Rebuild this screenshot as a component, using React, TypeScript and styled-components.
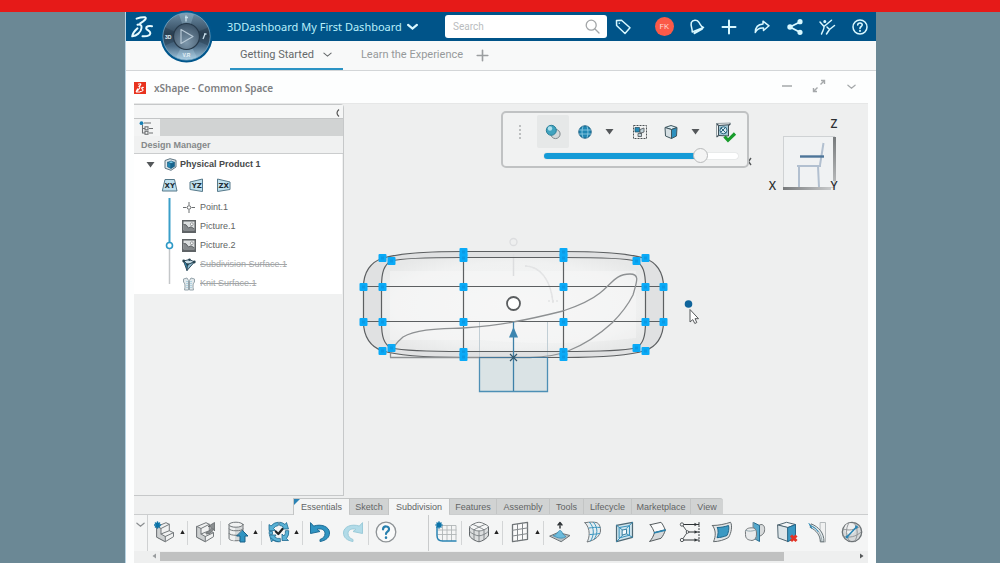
import React from "react";
import styled, { createGlobalStyle, css } from "styled-components";

const GlobalStyle = createGlobalStyle`
  * { box-sizing: border-box; }
  html, body { margin: 0; padding: 0; }
  body { font-family: "Liberation Sans", Arial, sans-serif; background: #6b8895; }
  button, input { font-family: inherit; margin: 0; }
`;

const Page = styled.div`
  min-height: 100vh;
  display: flex;
  flex-direction: column;
  background: #6b8895;
`;

const Banner = styled.div`
  height: 12px;
  background: #e61a18;
`;

const Frame = styled.div`
  flex: 1;
  width: 75.1%;
  margin-left: 12.5%;
  display: flex;
  flex-direction: column;
  background: #fdfefe;
  border-left: 1px solid #b8d3e2;
`;

const plainButton = css`
  border: 0;
  padding: 0;
  background: transparent;
  display: flex;
  align-items: center;
  justify-content: center;
  cursor: pointer;
`;

/* Header */

const Header = styled.header`
  position: relative;
  height: 29px;
  display: flex;
  align-items: center;
  background: #005489;
  color: #b9f0fb;
`;

const LogoLink = styled.a`
  display: flex;
  margin-left: 5px;
  width: 96px;
`;

const Compass = styled.button`
  ${plainButton}
  position: absolute;
  left: 34px;
  top: -2px;
  z-index: 2;
`;

const Brand = styled.h1`
  margin: 0;
  display: flex;
  gap: 3px;
  font: 400 11px/16px "Noto Sans", sans-serif;
  white-space: nowrap;
`;

const HeaderButton = styled.button<{ $grow?: boolean }>`
  ${plainButton}
  height: 24px;
  min-width: 22px;
  color: #d8f8ff;
  flex: ${(p) => (p.$grow ? "1" : "none")};
`;

const SearchBox = styled.label`
  display: flex;
  align-items: center;
  width: 162px;
  height: 23px;
  margin: 0 5px 0 auto;
  padding: 0 7px 0 8px;
  background: #fff;
  border-radius: 3px;
`;

const SearchInput = styled.input`
  flex: 1;
  min-width: 0;
  border: 0;
  padding: 0;
  outline: 0;
  background: transparent;
  font: 400 10px/14px Roboto, sans-serif;
  &::placeholder { color: #b9bcbe; opacity: 1; }
`;

const HeaderActions = styled.nav`
  display: flex;
  width: 228px;
  margin-left: 14px;
`;

const Avatar = styled.span`
  width: 19px;
  height: 19px;
  border-radius: 50%;
  background: #fb5a48;
  color: #ffd9d0;
  font: 400 8px/19px Roboto, sans-serif;
`;

/* Dashboard tabs */

const DashTabs = styled.nav`
  display: flex;
  height: 30px;
  padding-left: 104px;
  background: #f8f9f9;
  border-bottom: 1px solid #d3d6d8;
`;

const DashTab = styled.button<{ $active?: boolean }>`
  ${plainButton}
  height: 29px;
  gap: 9px;
  padding: ${(p) => (p.$active ? "0 11px 0 10px" : "0 10px 0 18px")};
  font: 400 11px/16px Roboto, sans-serif;
  color: ${(p) => (p.$active ? "#65696b" : "#96999b")};
  border-bottom: 2px solid ${(p) => (p.$active ? "#2b93c4" : "transparent")};
`;

const AddTab = styled.button`
  ${plainButton}
  width: 18px;
  height: 29px;
  color: #9b9ea0;
`;

/* Widget title */

const TitleRow = styled.div`
  display: flex;
  align-items: center;
  height: 32px;
  padding: 2px 13px 0 8px;
  gap: 8px;
`;

const WidgetTitle = styled.h2`
  margin: 0;
  flex: 1;
  font: 600 10px/14px "Noto Sans", sans-serif;
  color: #7d8082;
`;

const WindowButton = styled.button`
  ${plainButton}
  width: 24px;
  height: 22px;
  padding-bottom: 4px;
  color: #a5a8aa;
`;

/* Work area */

const Workspace = styled.main`
  flex: 1;
  display: flex;
  margin: 0 8px;
  background: #eeefef;
  border-top: 1px solid #e6e7e7;
`;

const SidePanel = styled.aside`
  width: 210px;
  display: flex;
  flex-direction: column;
  margin-bottom: 2px;
  background: #f0f1f1;
  border: 1px solid #c6c8c9;
  border-left: 0;
  border-radius: 0 4px 0 0;
`;

const PanelTop = styled.div`
  height: 13px;
  display: flex;
  justify-content: flex-end;
  background: #f5f6f6;
`;

const PanelCollapse = styled.button`
  ${plainButton}
  width: 12px;
  height: 16px;
  color: #555;
`;

const PanelTabs = styled.div`
  display: flex;
  height: 18px;
  background: #d1d3d3;
  border-top: 1px solid #c3c5c6;
`;

const PanelTab = styled.button`
  ${plainButton}
  width: 26px;
  background: #f3f4f4;
`;

const PanelTitle = styled.h3`
  margin: 0;
  padding-left: 7px;
  height: 18px;
  font: 700 9px/18px "Liberation Sans", sans-serif;
  color: #85888a;
  border-bottom: 1px solid #cbcdce;
`;

const TreeArea = styled.div`
  background: #fff;
  height: 140px;
  margin-right: 1px;
`;

const TreeRoot = styled.button`
  ${plainButton}
  height: 20px;
  padding-left: 12px;
  gap: 3px;
  font: 700 9px/20px "Liberation Sans", sans-serif;
  color: #454849;
`;

const RootIcon = styled.span`
  display: flex;
  margin-left: 6px;
`;

const Planes = styled.div`
  display: flex;
  gap: 9px;
  height: 24px;
  align-items: center;
  padding: 0 0 2px 27px;
`;

const PlaneButton = styled.button`
  ${plainButton}
`;

const TreeBody = styled.div`
  display: flex;
  padding-left: 30px;
`;

const TreeList = styled.ul`
  list-style: none;
  margin: 0;
  padding: 0 0 0 6px;
`;

const TreeItem = styled.li<{ $off?: boolean }>`
  display: flex;
  align-items: center;
  gap: 4px;
  height: 19px;
  font-size: 9px;
  line-height: 19px;
  color: ${(p) => (p.$off ? "#a2a5a7" : "#606364")};
  text-decoration: ${(p) => (p.$off ? "line-through" : "none")};
`;

/* Viewport */

const Viewport = styled.section`
  position: relative;
  flex: 1;
  min-height: 300px;
  overflow: hidden;
`;

const Scene = styled.svg`
  position: absolute;
  left: 0;
  top: 0;
`;

const AxisTriad = styled.svg`
  position: absolute;
  right: 26px;
  top: 12px;
`;

const Palette = styled.div`
  position: absolute;
  left: 157px;
  top: 7px;
  width: 248px;
  height: 57px;
  background: #f1f2f2;
  border: 2px solid #c0c2c3;
  border-radius: 5px;
  padding: 2px 7px 0 0;
`;

const PaletteRow = styled.div`
  display: flex;
  height: 33px;
`;

const PaletteButton = styled.button<{ $w: number; $on?: boolean }>`
  ${plainButton}
  width: ${(p) => p.$w}px;
  border-radius: 2px;
  background: ${(p) => (p.$on ? "#e6e8e8" : "transparent")};
`;

const Grip = styled.span`
  display: flex;
  flex-direction: column;
  justify-content: center;
  gap: 2px;
  width: 35px;
  align-items: center;
`;

const GripDot = styled.i`
  width: 2px;
  height: 2px;
  background: #bdbfc0;
`;

const Slider = styled.input`
  appearance: none;
  display: block;
  width: 194px;
  height: 16px;
  margin: 0 0 0 41px;
  background: transparent;
  &::-webkit-slider-runnable-track {
    height: 6px;
    border-radius: 3px;
    background: linear-gradient(to right, #159bd7 83%, #fff 83%);
    box-shadow: 0 0 1px #9aa0a3;
  }
  &::-webkit-slider-thumb {
    appearance: none;
    width: 15px;
    height: 15px;
    margin-top: -5px;
    border-radius: 50%;
    background: #f4f4f4;
    border: 1px solid #b8babb;
  }
`;

/* Bottom dock */

const Dock = styled.footer`
  margin: 0 8px;
  background: #eeefef;
  padding-bottom: 2px;
`;

const DockTabs = styled.div`
  display: flex;
  height: 17px;
  padding-left: 159px;
  border-bottom: 1px solid #cbcdce;
`;

const DockTab = styled.button<{ $w: number; $light?: boolean; $last?: boolean }>`
  ${plainButton}
  position: relative;
  width: ${(p) => p.$w}px;
  height: ${(p) => (p.$light ? 17 : 16)}px;
  font-size: 9px;
  line-height: 14px;
  color: #616465;
  background: ${(p) => (p.$light ? "#f4f5f5" : "#d1d3d3")};
  border: 1px solid #c3c5c5;
  border-width: 1px 0 0 1px;
  border-radius: ${(p) => (p.$last ? "0 3px 0 0" : "0")};
`;

const PinCorner = styled.i`
  position: absolute;
  left: 0;
  top: 0;
  border: 3px solid #2b83b5;
  border-right-color: transparent;
  border-bottom-color: transparent;
`;

const Tools = styled.div`
  display: flex;
  height: 36px;
  background: #f4f5f5;
`;

const DockCollapse = styled.button`
  ${plainButton}
  align-items: flex-start;
  width: 14px;
  padding-top: 5px;
  color: #8b8e90;
  border-right: 1px solid #cfd1d2;
`;

const ToolButton = styled.button<{ $w?: number; $sep?: boolean; $menu?: boolean }>`
  ${plainButton}
  position: relative;
  gap: 4px;
  justify-content: ${(p) => (p.$menu ? "flex-start" : "center")};
  padding: 0 0 2px ${(p) => (p.$menu ? 6 : 0)}px;
  flex: ${(p) => (p.$w ? `0 0 ${p.$w}px` : "1 1 0")};
  min-width: 0;
  &::after {
    content: "";
    display: ${(p) => (p.$sep ? "block" : "none")};
    position: absolute;
    right: 0;
    top: 6px;
    bottom: 6px;
    width: 1px;
    background: #d3d5d6;
  }
`;

const GroupGap = styled.div`
  width: 27px;
  border-right: 1px solid #c9cbcc;
`;

const ScrollRow = styled.div`
  display: flex;
  align-items: center;
  height: 10px;
  margin-left: 14px;
  padding: 0 4px 0 4px;
`;

const ScrollTrack = styled.div`
  flex: 1;
  height: 9px;
  margin: 0 2px 0 3px;
`;

const ScrollThumb = styled.div`
  width: 89.5%;
  height: 9px;
  background: #c0c1c1;
`;

/* Drawings */

const Chevron = ({ w = 10, sw = 1.4 }: { w?: number; sw?: number }) => (
  <svg width={w} height={w} viewBox="0 0 10 10" fill="none" stroke="currentColor" strokeWidth={sw} strokeLinecap="round">
    <path d="M1 3.500 5 6.800 9 3.500" />
  </svg>
);

const Caret = () => (
  <svg width="9" height="7" viewBox="0 0 9 7"><path d="M.5 1h8L4.500 6.500z" fill="#54575a" /></svg>
);

const UpMark = () => (
  <svg width="5" height="4" viewBox="0 0 5 4"><path d="M2.500 0 4.700 4H.3z" fill="#222" /></svg>
);

const CompanyLogo = () => (
  <svg width="22" height="24" viewBox="0 0 22 24" fill="none" stroke="#e6fbff" strokeWidth="2" strokeLinecap="round" strokeLinejoin="round">
    <path d="M5.600 3.600C8.500 2.600 12 1.900 14.200 2.300C16 3.200 13.400 5.900 9.200 8.400" />
    <path d="M6.500 9.800C9 9 11 10.200 10.500 13C10 17.500 5.600 20.700 1.200 21.300C1.600 19 4 15.500 6.500 13.300" />
    <path d="M21 11.200C18 10.600 15 11.400 15.200 13.300C15.500 15.300 19.700 15.900 19.300 18.300C18.900 20.900 14.500 21.400 11.500 21.200" />
  </svg>
);

const CompassArt = () => (
  <svg width="53" height="53" viewBox="0 0 53 53">
    <defs>
      <linearGradient id="cring" x1="0" y1="0" x2="0" y2="1">
        <stop offset="0" stopColor="#6b8ba4" /><stop offset=".45" stopColor="#31485b" /><stop offset=".7" stopColor="#4b6b86" /><stop offset="1" stopColor="#a6cbe2" />
      </linearGradient>
      <radialGradient id="ccore" cx=".5" cy=".75" r=".7">
        <stop offset="0" stopColor="#7d97ab" /><stop offset="1" stopColor="#40566a" />
      </radialGradient>
    </defs>
    <circle cx="26.500" cy="26.500" r="26" fill="#00568c" />
    <circle cx="26.500" cy="26.500" r="23.600" fill="url(#cring)" stroke="#7fa9c4" strokeWidth=".8" />
    <path d="M26.500 26.500 19 4.400A23.300 23.300 0 0 1 34 4.400zM26.500 26.500 16 47.200A23.300 23.300 0 0 0 37 47.200z" fill="#bfdef0" opacity=".25" />
    <path d="M26.500 26.500 5 35.500A23 23 0 0 1 5 17.500zM26.500 26.500 48 35.500A23 23 0 0 0 48 17.500z" fill="#182a3a" opacity=".3" />
    <circle cx="26.500" cy="26.500" r="13" fill="url(#ccore)" stroke="#26394a" strokeWidth="1.200" />
    <path d="M21 19.500v14l12-7z" fill="none" stroke="#b8c9d6" strokeWidth="1.200" strokeLinejoin="round" />
    <path d="M26 5.500v6M25 7.500h3M45 24l-2 5M44 24h2.500" stroke="#c9dfeb" strokeWidth="1.300" fill="none" />
    <g fill="#e6f2f8" fontFamily="Liberation Sans" fontWeight="700" fontSize="5">
      <text x="5" y="28.500">3D</text><text x="22.500" y="46.500">V.R</text>
    </g>
  </svg>
);

const line = { fill: "none", stroke: "currentColor", strokeWidth: 1.5, strokeLinejoin: "round" as const, strokeLinecap: "round" as const };

const TagIcon = () => (
  <svg width="18" height="18" viewBox="0 0 18 18" {...line}>
    <path d="M2.500 2.500 7.500 2.200 16 9.800 11 15.500 2.600 7.500z" /><circle cx="5.300" cy="5.200" r=".8" fill="currentColor" stroke="none" />
  </svg>
);
const BellIcon = () => (
  <svg width="18" height="18" viewBox="0 0 18 18" {...line}>
    <path d="M4.200 14C4.700 11 2.300 8 3.300 4.500C4.700 1.600 9 1.400 10.700 4C12.500 6.500 12.500 8.500 15.500 9.500L4.200 14z" /><path d="M6.500 15 14 10.800" strokeWidth="2.200" />
  </svg>
);
const PlusIcon = ({ s = 16 }: { s?: number }) => (
  <svg width={s} height={s} viewBox="0 0 16 16" {...line} strokeWidth={2}><path d="M8 1.500v13M1.500 8h13" /></svg>
);
const ForwardIcon = () => (
  <svg width="18" height="18" viewBox="0 0 18 18" {...line}><path d="M10 3.200 16 7.800 10.500 12.500 10.500 10C6.500 9.600 4 11 2.300 14.500C2.300 9.500 5 6.300 10 6z" /></svg>
);
const ShareIcon = () => (
  <svg width="18" height="18" viewBox="0 0 18 18" stroke="currentColor" strokeWidth="1.800" fill="currentColor">
    <path d="M14 4 4 9 14 14.200" fill="none" /><circle cx="14" cy="3.700" r="1.700" /><circle cx="4" cy="9" r="1.800" /><circle cx="14" cy="14.300" r="1.700" />
  </svg>
);
const PeopleIcon = () => (
  <svg width="18" height="18" viewBox="0 0 18 18" {...line}>
    <path d="M2 4 6 8.500 13.500 2.200M6 8.500C6.500 11 4.500 13 3.500 16M9 9 11.500 11.500 16.500 7.500M11.500 11.500 8.500 16" /><circle cx="6.800" cy="3.500" r=".8" fill="currentColor" />
  </svg>
);
const HelpIcon = () => (
  <svg width="18" height="18" viewBox="0 0 18 18" {...line}>
    <circle cx="9" cy="9" r="7" /><path d="M6.700 7C6.900 4.300 11.500 4.500 11.200 7C11 8.600 9 8.500 9 10.400" strokeWidth="1.600" /><path d="M9 12.800v.2" strokeWidth="1.900" />
  </svg>
);
const SearchIcon = () => (
  <svg width="15" height="15" viewBox="0 0 15 15" fill="none" stroke="#a3a6a8" strokeWidth="1.300" strokeLinecap="round">
    <circle cx="6.200" cy="6.200" r="5" /><path d="M10 10l4 4" />
  </svg>
);

const WidgetIcon = () => (
  <svg width="12" height="12" viewBox="0 0 12 12">
    <rect width="12" height="12" fill="#e8331f" />
    <path d="M4 2.300C6 1.500 7.500 1.700 6.500 3L5 4.300C6.800 4.500 6 7 2 9.800L3.800 6.500M9.800 5.500C7.500 5 7 6.500 8.700 7.300C9.800 8.500 8 9.700 6 9.600M2 10h4" fill="none" stroke="#fff" strokeWidth="1.100" />
  </svg>
);

const TreeTabIcon = () => (
  <svg width="16" height="14" viewBox="0 0 16 14" fill="none" stroke="#6e7173" strokeWidth="1.100">
    <path d="M5 2h7M3.500 4v8h2.500M3.500 7.500h2.500M10 7.500h4M10 12h4" /><rect x="6" y="5.800" width="3" height="3" /><rect x="6" y="10.300" width="3" height="3" /><circle cx="2.500" cy="2.200" r="1.900" fill="#177fb3" stroke="none" />
  </svg>
);
const ProductIcon = () => (
  <svg width="13" height="13" viewBox="0 0 13 13" strokeLinejoin="round">
    <path d="M1 2.500 6 .700 12 2.300 12 9 7 12.300 1 10.200z" fill="#e0e8ec" stroke="#5e7480" />
    <path d="M3.500 4.300 7.200 3 10.500 4.300 7 5.800z" fill="#6fc6e6" stroke="#1d5f82" strokeWidth=".7" />
    <path d="M3.500 4.300 7 5.800v4.600L3.500 8.800z" fill="#2189b8" stroke="#1d5f82" strokeWidth=".7" /><path d="M10.500 4.300 7 5.800v4.600l3.500-2z" fill="#136490" stroke="#1d5f82" strokeWidth=".7" />
  </svg>
);
const PlaneIcon = ({ kind }: { kind: string }) => {
  const d = kind === "XY" ? "M3.500 1.500h9.500l2.500 11.500H.8z" : kind === "YZ" ? "M1.500 4 14 1v12.500L1.500 11.500z" : "M2 1 14.500 4v7.500L2 13.500z";
  return (
    <svg width="18" height="15" viewBox="0 0 17 15">
      <path d={d} fill="#bfe0ee" stroke="#56798a" />
      <text x="8.300" y="10.300" textAnchor="middle" fontFamily="DejaVu Sans" fontWeight="700" fontSize="7" fill="#1d2b33">{kind}</text>
    </svg>
  );
};
const PointIcon = () => (
  <svg width="14" height="13" viewBox="0 0 14 13" fill="none" stroke="#6b6e70"><path d="M1 6.500h3.500M9.500 6.500h3.500M7 1v3M7 9v3" /><circle cx="7" cy="6.500" r="1.800" /></svg>
);
const PictureIcon = () => (
  <svg width="14" height="13" viewBox="0 0 14 13">
    <rect width="14" height="13" y="0" fill="#5f6366" /><rect x="1.500" y="1.500" width="11" height="8.500" fill="#dcdfe0" />
    <path d="M1.500 4.500 4 4.800 6.500 8 9 6.800 12.500 9V11H1.500z" fill="#85898c" /><path d="M1.500 4.500 4 4.800 6.500 8 9 6.800 12.500 9" fill="none" stroke="#4d5154" strokeWidth=".8" /><circle cx="9.800" cy="4.200" r="1.400" fill="#fff" stroke="#5f6366" strokeWidth=".6" />
  </svg>
);
const SubdivIcon = () => (
  <svg width="14" height="14" viewBox="0 0 14 14" strokeLinejoin="round">
    <path d="M1.500 3 7.500 1.500 12.500 4 5.500 6.500z" fill="#c8dde6" stroke="#345060" /><path d="M1.500 3 5.500 6.500 5 12.500z" fill="#2b8dbb" stroke="#345060" /><path d="M5.500 6.500 12.500 4 8 9 5 12.500z" fill="#91bccf" stroke="#345060" />
    <g fill="#26424f"><circle cx="1.700" cy="3" r="1.400" /><circle cx="12.300" cy="4" r="1.400" /><circle cx="7.500" cy="1.700" r="1.200" /><circle cx="5.500" cy="6.500" r="1.200" /></g>
  </svg>
);
const KnitIcon = () => (
  <svg width="14" height="14" viewBox="0 0 14 14" fill="#e3eaed" stroke="#96a4ab" strokeLinejoin="round">
    <path d="M1.500 2 5 1 6.500 3.500V13H2.500C3.500 9 3 6 1.500 5z" /><path d="M12.500 2 9 1 7.500 3.500V13h4C10.500 9 11 6 12.500 5z" /><path d="M5 4v8M9 4v8" stroke="#7fb8d2" strokeDasharray="1 1" />
  </svg>
);

const Timeline = () => (
  <svg width="12" height="95" viewBox="0 0 12 95" fill="none">
    <path d="M5.500 50v36" stroke="#c4c7c9" strokeWidth="1.500" /><path d="M5.500 0v45" stroke="#3a9fc9" strokeWidth="2" />
    <circle cx="5.500" cy="47.500" r="3" fill="#fff" stroke="#2b98c6" strokeWidth="1.600" />
  </svg>
);

/* Palette icons */
const SpheresIcon = () => (
  <svg width="18" height="18" viewBox="0 0 18 18"><circle cx="11.500" cy="11" r="4.600" fill="#d4d9db" stroke="#81898d" /><circle cx="7.300" cy="7.300" r="5" fill="#41a3bf" stroke="#287e98" /><circle cx="6" cy="5.500" r="2.200" fill="#aee0ec" /></svg>
);
const GlobeBlueIcon = () => (
  <svg width="16" height="16" viewBox="0 0 16 16" fill="none"><circle cx="8" cy="8" r="6.200" fill="#2187b3" stroke="#175d80" /><path d="M2 6h12M2 10h12M6 2.200C4.700 6 4.700 10 6 13.800M10 2.200C11.300 6 11.300 10 10 13.800" stroke="#a3d9ee" strokeWidth=".7" /></svg>
);
const SelectBoxIcon = () => (
  <svg width="16" height="16" viewBox="0 0 16 16"><rect x="1.500" y="1.500" width="13" height="13" fill="none" stroke="#4d5255" strokeDasharray="2 1" /><path d="M3 3.500h4.500v4.500H3z" fill="#2389b6" stroke="#244b5d" strokeWidth=".7" /><path d="M8 5.500 12 4v4l-4 1.500zM6 9.500l3.500-.5v3.500H6z" fill="#c0d2d9" stroke="#4d5255" strokeWidth=".8" /></svg>
);
const CubeIcon = () => (
  <svg width="16" height="16" viewBox="0 0 16 16" strokeLinejoin="round" stroke="#40565f"><path d="M2 3.500 8 1.500 14 3.500 8.500 5.500z" fill="#dceef4" /><path d="M2 3.500 8.500 5.500V14.500L2.500 12z" fill="#d5dfe3" /><path d="M14 3.500 8.500 5.500V14.500L13.500 12z" fill="#2d90be" /></svg>
);
const ConfirmIcon = () => (
  <svg width="24" height="24" viewBox="0 0 24 24" fill="none">
    <path d="M5.500 5.500 15.500 4.800v11.200L5.500 15.500z" fill="#a3c8d6" stroke="#3b4c55" /><path d="M3.500 3.500 5.500 5.500M17.500 3.500 15.500 5.500M3.500 17 5.500 15.500" stroke="#3b4c55" strokeWidth="1.300" /><path d="M3.500 3.500 17.500 3M3.500 3.500V17" stroke="#7d8b91" strokeWidth=".8" />
    <circle cx="10.500" cy="10.300" r="3.500" fill="#d7eaf1" stroke="#2c667f" /><path d="M8 8l5 5M8 12l4-4" stroke="#2c667f" />
    <path d="M11.500 16.500 15 20.300 22 13.500" stroke="#189c2b" strokeWidth="3.200" />
  </svg>
);

/* Dock icons */
const I = ({ children }: { children: React.ReactNode }) => (
  <svg width="22" height="22" viewBox="0 0 22 22" fill="none" stroke="#74797c" strokeLinejoin="round" strokeLinecap="round">{children}</svg>
);
const Star = ({ x = 4, y = 4 }: { x?: number; y?: number }) => (
  <path d={`M${x - 3} ${y}h6M${x} ${y - 3}v6M${x - 2} ${y - 2}l4 4M${x - 2} ${y + 2}l4-4`} stroke="#0b73a8" strokeWidth="1.600" />
);
const blue = "#2f94c2";

const Part = () => (
  <>
    <path d="M3 5.500 12 1.700 15.300 3.300V9.700L19.500 11.700V15.700L11.300 20.700 3 16.300z" fill="#f0f1f1" />
    <path d="M3 5.500 7 7.500V13L11.300 15.500V20.700L3 16.300z" fill="#cdd0d1" />
    <path d="M7 7.500 15.300 3.300M7 13 15.300 9.700M11.300 15.500 19.500 11.700" />
  </>
);
const icons: Record<string, React.ReactNode> = {
  newPart: <I><Part /><Star x={3.5} y={4} /></I>,
  openPart: <I><Part /><path d="M12.500 11.500C16.500 10.500 17.500 8 16.500 5.500L14 5.500 20.500 1.500V10L18.800 7.500C18.800 11 16.500 13 12.500 13z" fill="#8b8f91" stroke="#63676a" strokeWidth=".8" /></I>,
  save: <I><path d="M2 3.500v14C2 20.500 16 20.500 16 17.500v-14z" fill="#d5d8d9" /><path d="M3 6v12c2 1.500 4 1.700 5 1.500V7z" fill="#f0f1f1" stroke="none" /><ellipse cx="9" cy="3.700" rx="7" ry="2.500" fill="#f1f2f2" /><path d="M2 8C3 10.500 15 10.500 16 8M2 12.500C3 15 15 15 16 12.500" /><path d="M15.500 9.500 21 15h-3v6h-5v-6h-3z" fill={blue} stroke="#1a6187" /></I>,
  update: <I><path d="M10 1.200A9.800 9.800 0 0 0 3 5L1 3.500V9.500H7.500L5.500 7.500A6.500 6.500 0 0 1 10 4.500zM10 20.800A9.800 9.800 0 0 1 3 17M12 1.200A9.800 9.800 0 0 1 17 3.500L18.500 1.500 20.500 8 14 8 15.300 6A6.500 6.500 0 0 0 12 4.500zM20.800 10A9.800 9.800 0 0 1 18.500 17.500L20.500 19.500H14V13L16 15A6.500 6.500 0 0 0 17.500 10zM12 20.800A9.800 9.800 0 0 1 5 19L3.500 21 1.500 14 8 14 6.700 16A6.500 6.500 0 0 0 12 17.500zM1.200 13A9.800 9.800 0 0 1 1.200 10.500H4.500V13z" fill="#58b1d5" stroke="#1e6a90" strokeWidth=".8" /><path d="M7.800 10.500 10.300 13 14.500 8" stroke="#1e2325" strokeWidth="2.200" /></I>,
  undo: <I><path d="M1.500 2v10.500L11 10.500 8 8.300C12.500 7 16 9 16 12.500C16 15.500 14 17.500 11 18.500V20.500C17 19.500 20.500 16.500 20.500 12C20.500 5.500 12 2.500 5 5z" fill={blue} stroke="#1f6d96" /></I>,
  redo: <I><path d="M20.500 2v10.500L11 10.500 14 8.300C9.500 7 6 9 6 12.500C6 15.500 8 17.500 11 18.500V20.500C5 19.500 1.500 16.500 1.500 12C1.500 5.500 10 2.500 17 5z" fill="#b1dbe8" stroke="#9ccbd9" /></I>,
  help: <I><circle cx="11" cy="11" r="9.800" fill="#f9fafa" stroke="#8e9396" strokeWidth="1.300" /><path d="M8 8.300C8.300 4.300 14.500 4.700 14 8.500C13.700 10.700 11 10.700 11 13" stroke="#277fae" strokeWidth="2.200" /><path d="M11 16.500v.3" stroke="#277fae" strokeWidth="2.500" /></I>,
  sketch: <I><path d="M7 4.500h14v14M3 9h18M3 13.500h18M7.500 4.500v15M12 4.500v15M16.500 4.500v15" stroke="#b0b5b7" strokeWidth=".9" /><path d="M2 6v8.500C2 18 4 20 7.500 20H21" stroke="#2a84b3" strokeWidth="1.500" /><Star x={4} y={4} /></I>,
  box: <I><path d="M1.500 6C1.500 4.500 8.500 1.300 11 1.300C13.500 1.300 20.500 4.500 20.500 6V14C20.500 16.500 13.500 20.700 11 20.700C8.500 20.700 1.500 17 1.500 14.500z" fill="#dcdedf" stroke="#606568" /><path d="M2 6C4 4 9 1.800 11 1.800C13 1.800 18.500 4 20 6C17 8.500 13 10 11 10C9 10 4.500 8.500 2 6z" fill="#f6f7f7" stroke="none" /><path d="M1.500 6C4 8.700 8.500 10 11 10C13.500 10 18 8.500 20.500 6M11 10V20.700M1.500 10.300C4 13 8.500 14.800 11 14.800C13.500 14.800 18 13 20.500 10.300M5.500 3.700C9 5 13 7 16 8.800V18.800M16.500 3.700C13 5 9 7 6 8.800V18.800" stroke="#7b8083" strokeWidth=".9" /></I>,
  face: <I><path d="M3.500 3.700 18.500 1.300v17l-15 2.400z" fill="#fafafa" stroke="#6f7477" strokeWidth="1.300" /><path d="M8.500 3V20M13.500 2.200V19.200M3.500 9.300l15-2.400M3.500 15l15-2.400" stroke="#83888b" /></I>,
  push: <I><path d="M1 15 9 11.500 21 14.500 12.500 20.500z" fill="#b9c0c4" stroke="#6b7275" /><path d="M4.500 14.800C8.500 13.800 9 9.500 11 9.500C13.500 9.500 13 14 17 15.500C14 18 9 17.500 4.500 14.800z" fill="#6cbbdc" stroke="#398bb2" strokeWidth=".8" /><path d="M11 7V2M9 4l2-2.500L13 4" stroke="#2c3134" strokeWidth="1.400" /></I>,
  extrude: <I><path d="M3 1.700C8 .8 12 .9 15 1.700C17.500 3 18.700 6 18.500 10C18 14.500 14 19 5 21C7.500 17 9 8 3 1.700z" fill="#e3edf1" /><path d="M7.500 1.300C13 7 12 15 8.500 20M11.500 1.300C16.500 7 15.500 14 12 18.300M7 7C11 6.500 14 6 18 6.500M8 13.500C11 13.500 14 13 17.700 12.500" stroke="#3e97bf" /></I>,
  inset: <I><path d="M2.500 4.300 18.500 1.300v15l-16 4.400z" fill="#cfe5ee" stroke="#4e6874" strokeWidth="1.200" /><path d="M5.500 6.500 15.500 4.700v9.500l-10 2.700zM2.500 4.300l6 4.700M18.500 1.300l-6 6M2.500 20.700l6-6.500M18.500 16.300l-6-3.500" stroke="#3791bb" /><path d="M8.500 9 12.500 8.200v4.600L8.500 14z" fill="#f5fbfd" stroke="#3a7f9f" /></I>,
  bend: <I><path d="M4.300 3.700 15 1.300C17 3.500 18 6 19.300 9L8.500 11.700C7.500 9 6 6 4.300 3.700z" fill="#fafbfb" stroke="#565c5f" /><path d="M8.500 11.700 19.300 9C18.500 12 17 15 15 17.300L3.500 20.500C6 18 7.500 15 8.500 11.700z" fill="#d5d9db" stroke="#565c5f" /><path d="M8.500 11.700 19 9.100" stroke="#2984b1" strokeWidth="1.600" /></I>,
  bridge: <I><path d="M3 3.500H20M3 19H20M9 11H20" stroke="#2f3437" strokeWidth="1.200" /><path d="M20 1.500v19" stroke="#44494c" strokeDasharray="1 2" strokeWidth="1.200" /><path d="M3 3.500 8.500 11 3 19" stroke="#565b5e" /><g fill="#f6f7f7" stroke="#565b5e"><circle cx="3" cy="3.500" r="1.700" /><circle cx="8.500" cy="11" r="1.300" /><circle cx="3" cy="19" r="1.700" /></g><path d="M15.500 1.700v3.600l3-1.800zM15.500 9.200v3.600l3-1.800zM15.500 17.200v3.600l3-1.800z" fill="#2f3437" stroke="none" /></I>,
  fill: <I><path d="M1.500 4.500C8 4.500 14 3 19.500 1.300C21.500 4 20.500 12 17.500 16.500C13 19 8 20.500 2.500 20.700C5 15 5 9 1.500 4.500z" fill="#e3e6e7" stroke="#646b6e" /><path d="M6.500 6.500C10 6.500 14 5.700 17.500 4.500C18.300 7.500 17.500 11.500 16 14.500C13 15.700 9.500 16.500 6 16.700C7.300 13.500 7.500 10 6.500 6.500z" fill="#3b99c3" stroke="#1f678b" /></I>,
  mirror: <I><path d="M13 5 17 3.500C20 3.500 21 6 20.500 10C20 13 17.500 15 13 16z" fill="#d7dadb" /><path d="M9.500 1.500 15.500 4.500V20.500L9.500 17z" fill="#55a9cd" stroke="#246d92" /><path d="M1.500 10C2 7 6 6.500 10 7C12 8 12.500 10 12.500 13C12.500 17 11 19 8 19.500C4 19 1.500 18 1.500 14z" fill="#e9ebec" /><path d="M2 9.500C5 10.500 8 10.500 11.500 9M13 16V19M9.500 6V1.500" stroke="#7d979f" strokeWidth=".8" /></I>,
  remove: <I><path d="M2 4 10.500 1.300 19.500 3.500 12 6.500z" fill="#f3f6f7" stroke="#4e6470" /><path d="M2 4 12 6.500V20.500L2.500 17z" fill="#dce5e9" stroke="#4e6470" /><path d="M12 6.500 19.500 3.500V17L12 20.500z" fill="#3a98c3" stroke="#24678a" /><path d="M15 14.500l5.500 5.500M20.500 14.500l-5.500 5.500" stroke="#e33325" strokeWidth="3" strokeLinecap="butt" /></I>,
  align: <I><path d="M12.500 1.500h5V21h-5z" fill="#f0f1f1" stroke="#b5babc" /><path d="M3.500 3C11 6 16 12 16 20.700H12.500C12 14 8.500 9.500 2.500 6.500z" fill="#e3ecef" stroke="#687378" /><path d="M3 4.500C10 8 13.500 13 14 20.500" stroke="#8a979c" strokeWidth=".8" /><path d="M2 4.500C6 6 8.500 8 10 10.500M1 2.500l3 5" stroke="#2a8ab8" /></I>,
  globe: <I><circle cx="11" cy="11" r="9.700" fill="#d5d8d9" stroke="#6c7275" strokeWidth="1.300" /><circle cx="9" cy="7.500" r="5.500" fill="#eff0f0" stroke="none" /><path d="M2 8C7 10 14 9 19 5.500M2.500 15.500C8 17 15 16 20 11M8 1.800C4 8 5 16 9 20.500M13 1.500C17 7 17.500 15 13.500 20.500" stroke="#8a8f92" strokeWidth=".9" /><path d="M6 16 15.500 6" stroke="#2885b4" strokeWidth="1.600" /><circle cx="6" cy="16" r="1.400" fill="#2885b4" stroke="none" /><circle cx="15.500" cy="6" r="1.400" fill="#2885b4" stroke="none" /></I>,
};

const nodes: [number, number][] = [
  [382, 258], [391, 261], [463, 252], [463, 258], [563, 252], [563, 258], [636, 261], [645, 258],
  [363, 287], [382, 287], [463, 287], [563, 287], [645, 287], [663, 287],
  [363, 322], [382, 322], [463, 322], [563, 322], [645, 322], [663, 322],
  [382, 351], [391, 348], [463, 352], [463, 357], [563, 352], [563, 357], [636, 348], [645, 351],
];

const outer = "M363.500 287C363.500 272 371 262 382 258.500C398 253 430 251.500 463 251.500H563C597 251.500 629 253 645 258.500C656 262 663.500 272 663.500 287V322C663.500 337 656 347 645 350.500C629 356 597 357.500 563 357.500H463C430 357.500 398 356 382 350.500C371 347 363.500 337 363.500 322z";
const inner = "M381.500 287C381.500 272 384 265 391 261C400 258.500 430 257.500 463 257.500H563C597 257.500 627 258.500 636 261C643 265 645.500 272 645.500 287V322C645.500 337 643 344 636 348C627 350 597 351.500 563 351.500H463C430 351.500 400 350 391 348C384 344 381.500 337 381.500 322z";

const Model = () => (
  <Scene width="524" height="394" viewBox="344 104 524 394" fill="none" role="img" aria-label="Subdivision surface model">
    <defs>
      <radialGradient id="body" cx=".5" cy=".5" r=".6">
        <stop offset="0" stopColor="#f5f6f6" /><stop offset=".75" stopColor="#f0f1f1" /><stop offset="1" stopColor="#e7e8e8" />
      </radialGradient>
    </defs>
    <path d={outer} fill="#e0e1e2" />
    <path d={inner} fill="url(#body)" />
    <path d="M390 271H636V338Q560 347 479 340H390z" fill="#f8f9f9" opacity=".45" />
    <rect x="479.500" y="357.500" width="68" height="34" fill="#dae3e5" />
    <path d="M479.500 322V357M547.500 322V357" stroke="#c1ced5" />
    <path d="M479.500 357V391.500H547.500V357" stroke="#4d8fb5" strokeWidth="1.300" />
    <path d="M513.500 254V276" stroke="#dcdddf" strokeWidth="1.500" />
    <path d="M525 266C540 266 551 280 553 303M548 301h12" stroke="#dadbdc" strokeDasharray="2 2" />
    <path d="M525 266C540 266 551 280 553 303" stroke="#e3e4e5" strokeWidth="1.500" />
    <circle cx="513.500" cy="242" r="3.500" stroke="#dcdddf" strokeWidth="1.300" />
    <g stroke="#5c5f61" strokeWidth="1.200">
      <path d={outer} /><path d={inner} />
      <path d="M363 286.500H663M363 321.500H663M463.500 251V358M563.500 251V358" />
    </g>
    <path d="M390.500 357.500V354C392 348 396 343 403 337C418 328 445 329 463 328C490 326 503 324 513 322C530 319 547 315 563 311C575 307 590 301 600 293C612 284 615 274 630 274C640 274 637 281 633 295C628 305 621 314 612 323C601 333 586 344 568 351C556 356 545 357 530 357.500H390" stroke="#8d9092" strokeWidth="1.300" />
    <path d="M479 357.500H548" stroke="#44779a" />
    <path d="M513.500 322V391" stroke="#3d80a8" strokeWidth="1.300" />
    <path d="M513.500 327 518 337.500H509z" fill="#3d86b0" />
    <path d="M510 354l7 7M517 354l-7 7" stroke="#33566b" strokeWidth="1.200" />
    <circle cx="513.500" cy="303.500" r="6.500" fill="#fff" stroke="#5a5d5f" strokeWidth="1.800" />
    {nodes.map(([x, y]) => (
      <g key={`${x}-${y}`}>
        <rect x={x - 3.5} y={y - 4} width="8" height="8" rx="1" fill="#0aaaf7" />
        <rect x={x - 1} y={y - 1.5} width="3" height="3" fill="#0a9ae6" />
      </g>
    ))}
    <circle cx="688.500" cy="304" r="3.800" fill="#0f649b" />
    <path d="M690 309.500V322L692.800 319.600 694.800 323.500 696.800 322.500 695 318.700H698.500z" fill="#fff" stroke="#55585a" />
    <path d="M751 158 748.500 161.500 751 165" stroke="#55585a" strokeWidth="1.400" />
  </Scene>
);

const Axes = () => (
  <AxisTriad width="76" height="78" viewBox="766 116 76 78" fill="none" role="img" aria-label="View orientation">
    <defs>
      <linearGradient id="ax" x1="0" x2="1"><stop offset="0" stopColor="#777a7c" /><stop offset="1" stopColor="#c8cacb" /></linearGradient>
      <linearGradient id="az" x1="0" x2="0" y1="0" y2="1"><stop offset="0" stopColor="#777a7c" /><stop offset="1" stopColor="#b5b7b8" /></linearGradient>
    </defs>
    <rect x="783.500" y="136.500" width="51" height="51" fill="#f0f2f3" stroke="#cfd2d4" />
    <rect x="783" y="187" width="48" height="3" fill="url(#ax)" /><rect x="833" y="137" width="3" height="44" fill="url(#az)" />
    <path d="M823.500 143 820 165M797 166H821M799 166V187M818 166 819 187" stroke="#b2c0d0" strokeWidth="2" />
    <path d="M800 156.500H824" stroke="#4d7598" strokeWidth="2.400" />
    <g fill="#2c2f31" fontFamily="Noto Sans" fontSize="12" fontWeight="500" textAnchor="middle"><text x="834" y="128">Z</text><text x="772.500" y="190">X</text><text x="834" y="190">Y</text></g>
  </AxisTriad>
);

const dockTabs: [string, number][] = [["Essentials", 56], ["Sketch", 39], ["Subdivision", 61], ["Features", 47], ["Assembly", 53], ["Tools", 34], ["Lifecycle", 48], ["Marketplace", 59], ["View", 33]];

type Tool = { id: string; label: string; w?: number; sep?: boolean; menu?: boolean };
const mainTools: Tool[] = [
  { id: "newPart", label: "New", w: 40, sep: true, menu: true },
  { id: "openPart", label: "Open", w: 33, sep: true },
  { id: "save", label: "Save", w: 41, sep: true, menu: true },
  { id: "update", label: "Update", w: 41, sep: true, menu: true },
  { id: "undo", label: "Undo", w: 33 },
  { id: "redo", label: "Redo", w: 33, sep: true },
  { id: "help", label: "Help", w: 33 },
];
const surfaceTools: Tool[] = [
  { id: "sketch", label: "Sketch", w: 33, sep: true },
  { id: "box", label: "Box", w: 41, sep: true, menu: true },
  { id: "face", label: "Face", w: 41, sep: true, menu: true },
  ...["push", "extrude", "inset", "bend", "bridge", "fill", "mirror", "remove", "align", "globe"].map((id) => ({ id, label: id })),
];

const ToolSet = ({ tools }: { tools: Tool[] }) => (
  <>
    {tools.map((t) => (
      <ToolButton key={t.id} type="button" aria-label={t.label} $w={t.w} $sep={t.sep} $menu={t.menu}>
        {icons[t.id]}
        {t.menu && <UpMark />}
      </ToolButton>
    ))}
  </>
);

export default function App() {
  return (
    <Page>
      <GlobalStyle />
      <Banner />
      <Frame>
        <Header>
          <LogoLink href="#" aria-label="Home"><CompanyLogo /></LogoLink>
          <Compass type="button" aria-label="Compass"><CompassArt /></Compass>
          <Brand><span>3DDashboard</span><span>My First Dashboard</span></Brand>
          <HeaderButton type="button" aria-label="Dashboards"><Chevron w={11} sw={2} /></HeaderButton>
          <SearchBox>
            <SearchInput type="text" placeholder="Search" aria-label="Search" />
            <SearchIcon />
          </SearchBox>
          <HeaderButton type="button" aria-label="Tags"><TagIcon /></HeaderButton>
          <HeaderActions>
            <HeaderButton $grow type="button" aria-label="Profile"><Avatar>FK</Avatar></HeaderButton>
            <HeaderButton $grow type="button" aria-label="Notifications"><BellIcon /></HeaderButton>
            <HeaderButton $grow type="button" aria-label="Add"><PlusIcon /></HeaderButton>
            <HeaderButton $grow type="button" aria-label="Forward"><ForwardIcon /></HeaderButton>
            <HeaderButton $grow type="button" aria-label="Share"><ShareIcon /></HeaderButton>
            <HeaderButton $grow type="button" aria-label="Communities"><PeopleIcon /></HeaderButton>
            <HeaderButton $grow type="button" aria-label="Help"><HelpIcon /></HeaderButton>
          </HeaderActions>
        </Header>
        <DashTabs>
          <DashTab type="button" $active>Getting Started<Chevron w={9} sw={1.2} /></DashTab>
          <DashTab type="button">
            <span>Learn the Experience</span>
          </DashTab>
          <AddTab type="button" aria-label="Add tab"><PlusIcon s={13} /></AddTab>
        </DashTabs>
        <TitleRow>
          <WidgetIcon />
          <WidgetTitle>xShape - Common Space</WidgetTitle>
          <WindowButton type="button" aria-label="Minimize"><svg width="12" height="10" viewBox="0 0 12 10"><path d="M1 5h10" stroke="currentColor" strokeWidth="1.500" /></svg></WindowButton>
          <WindowButton type="button" aria-label="Maximize"><svg width="14" height="14" viewBox="0 0 14 14" fill="none" stroke="currentColor" strokeWidth="1.400"><path d="M8.500 5.500 12.500 1.500M9 1.500h3.500V5M5.500 8.500 1.500 12.500M1.500 9v3.500H5" /></svg></WindowButton>
          <WindowButton type="button" aria-label="Menu"><Chevron w={9} /></WindowButton>
        </TitleRow>
        <Workspace>
          <SidePanel>
            <PanelTop>
              <PanelCollapse type="button" aria-label="Collapse panel"><svg width="5" height="8" viewBox="0 0 5 8"><path d="M4 .5Q0 4 4 7.500" fill="none" stroke="currentColor" strokeWidth="1.200" /></svg></PanelCollapse>
            </PanelTop>
            <PanelTabs><PanelTab type="button" aria-label="Design tree"><TreeTabIcon /></PanelTab></PanelTabs>
            <PanelTitle>Design Manager</PanelTitle>
            <TreeArea>
              <TreeRoot type="button"><Caret /><RootIcon><ProductIcon /></RootIcon>Physical Product 1</TreeRoot>
              <Planes>
                {["XY", "YZ", "ZX"].map((k) => <PlaneButton key={k} type="button"><PlaneIcon kind={k} /></PlaneButton>)}
              </Planes>
              <TreeBody>
                <Timeline />
                <TreeList>
                  <TreeItem><PointIcon />Point.1</TreeItem>
                  <TreeItem><PictureIcon />Picture.1</TreeItem>
                  <TreeItem><PictureIcon />Picture.2</TreeItem>
                  <TreeItem $off><SubdivIcon />Subdivision Surface.1</TreeItem>
                  <TreeItem $off><KnitIcon />Knit Surface.1</TreeItem>
                </TreeList>
              </TreeBody>
            </TreeArea>
          </SidePanel>
          <Viewport>
            <Model />
            <Axes />
            <Palette>
              <PaletteRow>
                <Grip><GripDot /><GripDot /><GripDot /><GripDot /></Grip>
                <PaletteButton $w={32} $on type="button" aria-label="Transparency"><SpheresIcon /></PaletteButton>
                <PaletteButton $w={32} type="button" aria-label="Display"><GlobeBlueIcon /></PaletteButton>
                <PaletteButton $w={18} type="button" aria-label="Display options"><Caret /></PaletteButton>
                <PaletteButton $w={44} type="button" aria-label="Select"><SelectBoxIcon /></PaletteButton>
                <PaletteButton $w={20} type="button" aria-label="Cage"><CubeIcon /></PaletteButton>
                <PaletteButton $w={30} type="button" aria-label="Cage options"><Caret /></PaletteButton>
                <PaletteButton $w={30} type="button" aria-label="Confirm"><ConfirmIcon /></PaletteButton>
              </PaletteRow>
              <Slider type="range" min={0} max={100} defaultValue={83} aria-label="Opacity" />
            </Palette>
          </Viewport>
        </Workspace>
        <Dock>
          <DockTabs>
            {dockTabs.map(([name, w], i) => (
              <DockTab key={name} type="button" $w={w} $light={i === 0 || i === 2} $last={i === 8}>
                {i === 0 && <PinCorner />}
                {name}
              </DockTab>
            ))}
          </DockTabs>
          <Tools>
            <DockCollapse type="button" aria-label="Collapse toolbar"><Chevron w={9} /></DockCollapse>
            <ToolSet tools={mainTools} />
            <GroupGap />
            <ToolSet tools={surfaceTools} />
          </Tools>
          <ScrollRow>
            <svg width="5" height="6" viewBox="0 0 5 6"><path d="M4 .5v5L.5 3z" fill="#999c9e" /></svg>
            <ScrollTrack><ScrollThumb /></ScrollTrack>
            <svg width="5" height="6" viewBox="0 0 5 6"><path d="M1 .5v5L4.500 3z" fill="#55585a" /></svg>
          </ScrollRow>
        </Dock>
      </Frame>
    </Page>
  );
}
